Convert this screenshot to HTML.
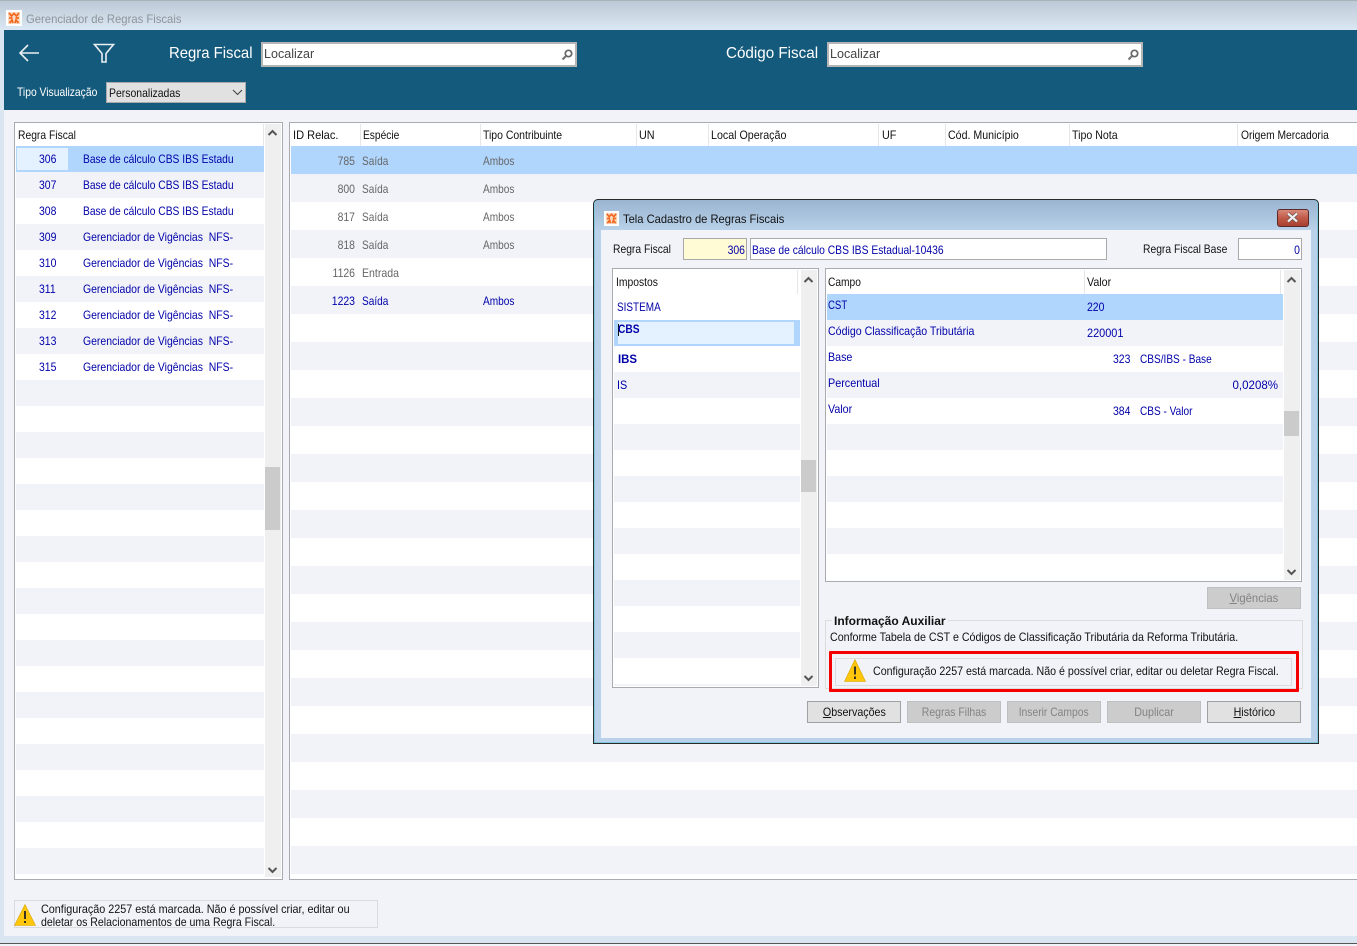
<!DOCTYPE html>
<html lang="pt"><head><meta charset="utf-8"><title>Gerenciador de Regras Fiscais</title>
<style>
html,body{margin:0;padding:0}
body{width:1357px;height:946px;overflow:hidden;position:relative;background:#f1f3f9;font-family:"Liberation Sans",sans-serif;font-size:12px;color:#111}
div,svg.a{position:absolute}
.t{position:absolute;white-space:nowrap;line-height:14px;transform:scaleX(var(--s,.87));transform-origin:0 0}
.b{color:#0000a8}.g{color:#666}.r{text-align:right;transform-origin:100% 0}
.hd{position:absolute;width:1px;background:#e4e6ea}
.btn{position:absolute;top:701px;width:92px;height:20px;border:1px solid #a0a0a0;background:#e1e1e1;text-align:center;line-height:20px}
.btn span{display:inline-block;transform:scaleX(var(--s,.88))}
.dis{background:#cccccc;border-color:#bfbfbf;color:#838383}
.inp{position:absolute;background:#fff;border:1px solid #a9a9a9;box-sizing:border-box}
u{text-decoration:underline}
</style></head><body>
<!-- window frame -->
<div style="left:0;top:0;width:1357px;height:30px;background:linear-gradient(#bcc8d5,#dbe8f4)"></div>
<div style="left:0;top:0;width:1357px;height:1px;background:#a8b0b8"></div>
<div style="left:0;top:30px;width:4px;height:906px;background:#d9e6f2"></div>
<div style="left:0;top:936px;width:1357px;height:7px;background:#d9e6f2"></div>
<div style="left:0;top:943px;width:1357px;height:1px;background:#555"></div>
<svg class="a" style="left:6px;top:10px" width="16" height="16" viewBox="0 0 16 16"><rect width="16" height="16" fill="#fff"/><rect x="2" y="2" width="12" height="12" fill="#fbd9c0"/><path d="M3 3l2.500 3 2.500-2.500 2.500 2.500 2.500-3M3 8h3.500M9.500 8H13M3.500 13l2.500-3 1 3M12.500 13L10 10l-1 3" stroke="#f26a21" stroke-width="1.800" fill="none"/></svg>
<div class="t" style="--s:.94;left:26px;top:12px;color:#8d939a">Gerenciador de Regras Fiscais</div>
<!-- header -->
<div style="left:4px;top:30px;width:1353px;height:80px;background:#145a7c"></div>
<svg class="a" style="left:17px;top:42px" width="24" height="22" viewBox="0 0 24 22"><path d="M22 11H3M11 3l-8 8 8 8" stroke="#e8eef2" stroke-width="1.6" fill="none"/></svg>
<svg class="a" style="left:92px;top:42px" width="24" height="22" viewBox="0 0 24 22"><path d="M2.500 2.500h19l-7.500 9v8.500h-4v-8.500z" stroke="#e8eef2" stroke-width="1.6" fill="none"/></svg>
<div class="t" style="--s:.93;left:169px;top:44px;font-size:16px;line-height:20px;color:#fff">Regra Fiscal</div>
<div class="inp" style="left:261px;top:42px;width:316px;height:25px;border:2px solid #b5b5b5"></div>
<div class="t" style="--s:.965;left:264px;top:47px;color:#444;font-size:13px">Localizar</div>
<svg class="a" style="left:560px;top:48px" width="14" height="14" viewBox="0 0 14 14"><circle cx="8.500" cy="5.500" r="3.200" fill="#fff" stroke="#666" stroke-width="1.700"/><path d="M6 8l-3.500 3.500" stroke="#777" stroke-width="2.200"/></svg>
<div class="t" style="--s:.95;left:726px;top:44px;font-size:16px;line-height:20px;color:#fff">Código Fiscal</div>
<div class="inp" style="left:827px;top:42px;width:316px;height:25px;border:2px solid #b5b5b5"></div>
<div class="t" style="--s:.965;left:830px;top:47px;color:#444;font-size:13px">Localizar</div>
<svg class="a" style="left:1126px;top:48px" width="14" height="14" viewBox="0 0 14 14"><circle cx="8.500" cy="5.500" r="3.200" fill="#fff" stroke="#666" stroke-width="1.700"/><path d="M6 8l-3.500 3.500" stroke="#777" stroke-width="2.200"/></svg>
<div class="t" style="--s:.86;left:17px;top:85px;color:#fff">Tipo Visualização</div>
<div class="inp" style="left:106px;top:82px;width:140px;height:21px;background:#e1e1e1;border:1px solid #a9a9a9"></div>
<div class="t" style="left:109px;top:86px">Personalizadas</div>
<svg class="a" style="left:232px;top:89px" width="11" height="7" viewBox="0 0 11 7"><path d="M1 1l4.500 4.500L10 1" stroke="#444" stroke-width="1.100" fill="none"/></svg>

<!-- left grid -->
<div style="left:14px;top:122px;width:267px;height:756px;border:1px solid #a9abb0;background:#fff"></div>
<div style="left:16px;top:146px;width:248px;height:728px;background:repeating-linear-gradient(#fff 0 26px,#f1f3f9 26px 52px)"></div>
<div style="left:16px;top:146px;width:248px;height:26px;background:#b0d6fd"></div>
<div style="left:17px;top:148px;width:51px;height:22px;background:#e4f1fe"></div>
<div style="left:265px;top:124px;width:16px;height:753px;background:#efefef"></div>
<div style="left:265px;top:467px;width:15px;height:63px;background:#cbcbcb"></div>
<div class="hd" style="left:263px;top:124px;height:22px"></div>
<svg class="a" style="left:267px;top:128px" width="11" height="9" viewBox="0 0 11 9"><path d="M1.500 7l4-4 4 4" stroke="#555" stroke-width="2" fill="none"/></svg>
<svg class="a" style="left:267px;top:866px" width="11" height="9" viewBox="0 0 11 9"><path d="M1.500 2l4 4 4-4" stroke="#555" stroke-width="2" fill="none"/></svg>
<div class="t" style="--s:.86;left:18px;top:128px">Regra Fiscal</div>
<div class="t b" style="left:39px;top:152px">306</div><div class="t b" style="--s:.855;left:83px;top:152px">Base de cálculo CBS IBS Estadu</div>
<div class="t b" style="left:39px;top:178px">307</div><div class="t b" style="--s:.855;left:83px;top:178px">Base de cálculo CBS IBS Estadu</div>
<div class="t b" style="left:39px;top:204px">308</div><div class="t b" style="--s:.855;left:83px;top:204px">Base de cálculo CBS IBS Estadu</div>
<div class="t b" style="left:39px;top:230px">309</div><div class="t b" style="left:83px;top:230px">Gerenciador de Vigências&nbsp; NFS-</div>
<div class="t b" style="left:39px;top:256px">310</div><div class="t b" style="left:83px;top:256px">Gerenciador de Vigências&nbsp; NFS-</div>
<div class="t b" style="left:39px;top:282px">311</div><div class="t b" style="left:83px;top:282px">Gerenciador de Vigências&nbsp; NFS-</div>
<div class="t b" style="left:39px;top:308px">312</div><div class="t b" style="left:83px;top:308px">Gerenciador de Vigências&nbsp; NFS-</div>
<div class="t b" style="left:39px;top:334px">313</div><div class="t b" style="left:83px;top:334px">Gerenciador de Vigências&nbsp; NFS-</div>
<div class="t b" style="left:39px;top:360px">315</div><div class="t b" style="left:83px;top:360px">Gerenciador de Vigências&nbsp; NFS-</div>

<!-- right grid -->
<div style="left:289px;top:122px;width:1068px;height:756px;border:1px solid #a9abb0;border-right:0;background:#fff"></div>
<div style="left:291px;top:146px;width:1066px;height:728px;background:repeating-linear-gradient(#fff 0 28px,#f1f3f9 28px 56px)"></div>
<div style="left:291px;top:146px;width:1066px;height:28px;background:#b0d6fd"></div>
<div class="hd" style="left:360px;top:124px;height:22px"></div>
<div class="hd" style="left:480px;top:124px;height:22px"></div>
<div class="hd" style="left:636px;top:124px;height:22px"></div>
<div class="hd" style="left:708px;top:124px;height:22px"></div>
<div class="hd" style="left:878px;top:124px;height:22px"></div>
<div class="hd" style="left:945px;top:124px;height:22px"></div>
<div class="hd" style="left:1069px;top:124px;height:22px"></div>
<div class="hd" style="left:1237px;top:124px;height:22px"></div>
<div class="t" style="--s:.92;left:293px;top:128px">ID Relac.</div>
<div class="t" style="--s:.85;left:363px;top:128px">Espécie</div>
<div class="t" style="left:483px;top:128px">Tipo Contribuinte</div>
<div class="t" style="--s:.9;left:639px;top:128px">UN</div>
<div class="t" style="--s:.89;left:711px;top:128px">Local Operação</div>
<div class="t" style="--s:.9;left:882px;top:128px">UF</div>
<div class="t" style="--s:.885;left:948px;top:128px">Cód. Município</div>
<div class="t" style="--s:.885;left:1072px;top:128px">Tipo Nota</div>
<div class="t" style="--s:.855;left:1241px;top:128px">Origem Mercadoria</div>
<div class="t g r" style="left:305px;width:50px;top:154px">785</div><div class="t g" style="--s:.84;left:362px;top:154px">Saída</div><div class="t g" style="--s:.84;left:483px;top:154px">Ambos</div>
<div class="t g r" style="left:305px;width:50px;top:182px">800</div><div class="t g" style="--s:.84;left:362px;top:182px">Saída</div><div class="t g" style="--s:.84;left:483px;top:182px">Ambos</div>
<div class="t g r" style="left:305px;width:50px;top:210px">817</div><div class="t g" style="--s:.84;left:362px;top:210px">Saída</div><div class="t g" style="--s:.84;left:483px;top:210px">Ambos</div>
<div class="t g r" style="left:305px;width:50px;top:238px">818</div><div class="t g" style="--s:.84;left:362px;top:238px">Saída</div><div class="t g" style="--s:.84;left:483px;top:238px">Ambos</div>
<div class="t g r" style="left:305px;width:50px;top:266px">1126</div><div class="t g" style="--s:.88;left:362px;top:266px">Entrada</div>
<div class="t b r" style="left:305px;width:50px;top:294px">1223</div><div class="t b" style="--s:.84;left:362px;top:294px">Saída</div><div class="t b" style="--s:.84;left:483px;top:294px">Ambos</div>

<!-- bottom warning -->
<div style="left:14px;top:900px;width:362px;height:26px;border:1px solid #d9dbdf"></div>
<svg class="a" style="left:14px;top:904px" width="22" height="22" viewBox="0 0 22 22"><path d="M11 0.500L21.500 21.500H0.500z" fill="#ffc60b" stroke="#d9a400" stroke-width=".6"/><path d="M11 7v8M11 17v2" stroke="#222" stroke-width="1.800"/></svg>
<div class="t" style="--s:.9;left:41px;top:902px">Configuração 2257 está marcada. Não é possível criar, editar ou</div>
<div class="t" style="--s:.88;left:41px;top:915px">deletar os Relacionamentos de uma Regra Fiscal.</div>

<!-- dialog -->
<div style="left:593px;top:199px;width:724px;height:543px;border:1px solid #2a2a2a;border-radius:5px 5px 0 0;background:linear-gradient(#9ab4d0 0,#b9d2ea 31px,#b9d2ea 100%);box-shadow:inset 1px 0 #7fc8e0,inset -1px 0 #7fc8e0,inset 0 -1px #7fc8e0"></div>
<div style="left:601px;top:230px;width:710px;height:508px;background:#f1f3f9"></div>
<svg class="a" style="left:604px;top:211px" width="15" height="15" viewBox="0 0 16 16"><rect width="16" height="16" fill="#fff"/><rect x="2" y="2" width="12" height="12" fill="#fbd9c0"/><path d="M3 3l2.500 3 2.500-2.500 2.500 2.500 2.500-3M3 8h3.500M9.500 8H13M3.500 13l2.500-3 1 3M12.500 13L10 10l-1 3" stroke="#f26a21" stroke-width="1.800" fill="none"/></svg>
<div class="t" style="--s:.93;left:623px;top:212px;color:#111">Tela Cadastro de Regras Fiscais</div>
<div style="left:1277px;top:209px;width:30px;height:16px;border:1px solid #5a2a28;border-radius:3px;background:linear-gradient(#d9897a,#c05a48 50%,#a84030)"></div>
<svg class="a" style="left:1286px;top:212px" width="13" height="11" viewBox="0 0 13 11"><path d="M2 1.500l9 8M11 1.500l-9 8" stroke="#6b4a46" stroke-width="3.600"/><path d="M2 1.500l9 8M11 1.500l-9 8" stroke="#eeeeee" stroke-width="2.200"/></svg>
<div class="t" style="--s:.86;left:613px;top:242px">Regra Fiscal</div>
<div class="inp" style="left:683px;top:238px;width:64px;height:22px;background:#fffbd5"></div>
<div class="t b r" style="left:690px;width:55px;top:243px">306</div>
<div class="inp" style="left:750px;top:238px;width:357px;height:22px"></div>
<div class="t b" style="--s:.86;left:752px;top:243px">Base de cálculo CBS IBS Estadual-10436</div>
<div class="t" style="--s:.86;left:1143px;top:242px">Regra Fiscal Base</div>
<div class="inp" style="left:1238px;top:238px;width:64px;height:22px"></div>
<div class="t b r" style="left:1250px;width:50px;top:243px">0</div>

<!-- impostos -->
<div style="left:612px;top:268px;width:205px;height:418px;border:1px solid #a9abb0;background:#fff"></div>
<div style="left:614px;top:294px;width:186px;height:392px;background:repeating-linear-gradient(#fff 0 26px,#f1f3f9 26px 52px)"></div>
<div style="left:614px;top:320px;width:186px;height:26px;background:#b0d6fd"></div>
<div style="left:618px;top:322px;width:176px;height:22px;background:#e4f1fe"></div>
<div style="left:801px;top:270px;width:16px;height:416px;background:#efefef"></div>
<div style="left:801px;top:460px;width:15px;height:32px;background:#cbcbcb"></div>
<div class="hd" style="left:797px;top:270px;height:24px"></div>
<svg class="a" style="left:803px;top:275px" width="11" height="9" viewBox="0 0 11 9"><path d="M1.500 7l4-4 4 4" stroke="#555" stroke-width="2" fill="none"/></svg>
<svg class="a" style="left:803px;top:674px" width="11" height="9" viewBox="0 0 11 9"><path d="M1.500 2l4 4 4-4" stroke="#555" stroke-width="2" fill="none"/></svg>
<div class="t" style="--s:.86;left:616px;top:275px">Impostos</div>
<div class="t b" style="--s:.83;left:617px;top:300px">SISTEMA</div>
<div style="left:618px;top:324px;width:1px;height:12px;background:#111"></div>
<div class="t b" style="--s:.85;left:618px;top:322px;font-weight:bold">CBS</div>
<div class="t b" style="--s:.95;left:618px;top:352px;font-weight:bold">IBS</div>
<div class="t b" style="--s:.9;left:617px;top:378px">IS</div>

<!-- campo -->
<div style="left:825px;top:268px;width:475px;height:312px;border:1px solid #a9abb0;background:#fff"></div>
<div style="left:827px;top:294px;width:456px;height:286px;background:repeating-linear-gradient(#fff 0 26px,#f1f3f9 26px 52px)"></div>
<div style="left:827px;top:294px;width:456px;height:26px;background:#b0d6fd"></div>
<div style="left:1284px;top:270px;width:16px;height:310px;background:#efefef"></div>
<div style="left:1284px;top:411px;width:15px;height:25px;background:#cbcbcb"></div>
<div class="hd" style="left:1084px;top:270px;height:24px"></div>
<div class="hd" style="left:1280px;top:270px;height:24px"></div>
<svg class="a" style="left:1286px;top:275px" width="11" height="9" viewBox="0 0 11 9"><path d="M1.500 7l4-4 4 4" stroke="#555" stroke-width="2" fill="none"/></svg>
<svg class="a" style="left:1286px;top:568px" width="11" height="9" viewBox="0 0 11 9"><path d="M1.500 2l4 4 4-4" stroke="#555" stroke-width="2" fill="none"/></svg>
<div class="t" style="--s:.85;left:828px;top:275px">Campo</div>
<div class="t" style="--s:.89;left:1087px;top:275px">Valor</div>
<div class="t b" style="--s:.8;left:828px;top:298px">CST</div><div class="t b" style="left:1087px;top:300px">220</div>
<div class="t b" style="--s:.885;left:828px;top:324px">Código Classificação Tributária</div><div class="t b" style="--s:.91;left:1087px;top:326px">220001</div>
<div class="t b" style="--s:.89;left:828px;top:350px">Base</div><div class="t b" style="left:1113px;top:352px">323</div><div class="t b" style="--s:.84;left:1140px;top:352px">CBS/IBS - Base</div>
<div class="t b" style="--s:.9;left:828px;top:376px">Percentual</div><div class="t b r" style="--s:.96;left:1200px;width:78px;top:378px">0,0208%</div>
<div class="t b" style="--s:.89;left:828px;top:402px">Valor</div><div class="t b" style="left:1113px;top:404px">384</div><div class="t b" style="--s:.84;left:1140px;top:404px">CBS - Valor</div>

<div class="btn dis" style="left:1207px;top:587px;width:92px"><span style="--s:.94"><u>V</u>igências</span></div>
<!-- informacao auxiliar -->
<div style="left:825px;top:620px;width:476px;height:67px;border:1px solid #dcdcdc"></div>
<div class="t" style="--s:1;left:832px;top:614px;font-weight:bold;background:#f1f3f9;padding:0 2px;color:#111">Informação Auxiliar</div>
<div class="t" style="--s:.889;left:830px;top:630px">Conforme Tabela de CST e Códigos de Classificação Tributária da Reforma Tributária.</div>
<div style="left:835px;top:658px;width:455px;height:26px;border:1px solid #d9dbdf"></div>
<svg class="a" style="left:844px;top:659px" width="22" height="23" viewBox="0 0 22 23"><path d="M11 0.500L21.500 22.500H0.500z" fill="#ffc60b" stroke="#d9a400" stroke-width=".6"/><path d="M11 7.500v8M11 17.500v2.500" stroke="#222" stroke-width="1.800"/></svg>
<div class="t" style="--s:.888;left:873px;top:664px">Configuração 2257 está marcada. Não é possível criar, editar ou deletar Regra Fiscal.</div>
<div style="left:829px;top:651px;width:464px;height:35px;border:3px solid #f50000;border-radius:1px"></div>
<div class="btn" style="left:807px"><span style="--s:.89"><u>O</u>bservações</span></div>
<div class="btn dis" style="left:907px"><span style="--s:.87">Regras Filhas</span></div>
<div class="btn dis" style="left:1007px"><span style="--s:.86">Inserir Campos</span></div>
<div class="btn dis" style="left:1107px"><span style="--s:.9">Duplicar</span></div>
<div class="btn" style="left:1207px"><span style="--s:.89"><u>H</u>istórico</span></div>
</body></html>
